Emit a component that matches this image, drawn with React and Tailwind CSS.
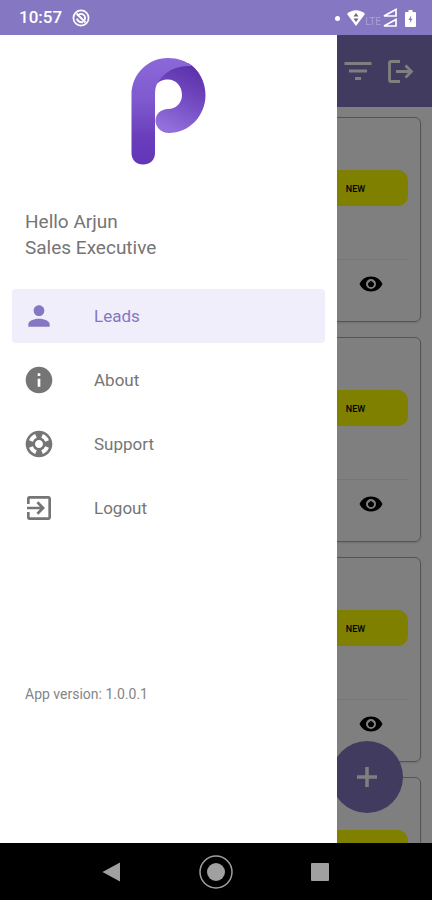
import React from 'react';
import { MdPerson, MdInfo, MdSupport, MdExitToApp, MdFilterList } from 'react-icons/md';

const menuItems = [
    { label: 'Leads', icon: MdPerson, active: true },
    { label: 'About', icon: MdInfo },
    { label: 'Support', icon: MdSupport },
    { label: 'Logout', icon: MdExitToApp },
];

const leads = [
    { id: 1, status: 'NEW' },
    { id: 2, status: 'NEW' },
    { id: 3, status: 'NEW' },
    { id: 4, status: '' },
];

const Logo = () => (
    <svg width="76" height="108" viewBox="0 0 76 108" className="mx-auto" role="img" aria-label="P">
        <defs>
            <linearGradient id="stem" x1="0" y1="0" x2="0" y2="1">
                <stop offset="0" stopColor="#8b68d8" />
                <stop offset="0.4" stopColor="#7f59cf" />
                <stop offset="0.75" stopColor="#6a3dbb" />
                <stop offset="1" stopColor="#6236b8" />
            </linearGradient>
            <linearGradient id="bowl" x1="0.75" y1="0" x2="0.4" y2="1">
                <stop offset="0" stopColor="#5a2fa8" />
                <stop offset="0.45" stopColor="#7047bf" />
                <stop offset="1" stopColor="#9270dc" />
            </linearGradient>
        </defs>
        <path
            d="M58 6C69 12 75.500 25 75.500 38C75.500 59 59 76 39 76C31 76 25.500 70 25.500 63.500C25.500 57 31 52 38 52C46 52 52 46 52 38C52 29 46 22.500 38 22.500C33 22.500 29 24 26 28C32 14 44 8 58 6Z"
            fill="url(#bowl)"
        />
        <path
            d="M1.500 38C1.500 17 18 1 38 1C48 1 56 4 62 9C46 8 34 15 28 25C26 28 25 32 25 37V96C25 103 20 107.500 13 107.500C6.500 107.500 1.500 103 1.500 96Z"
            fill="url(#stem)"
        />
    </svg>
);

const EyeIcon = () => (
    <svg width="24" height="16" viewBox="0 0 24 16" fill="currentColor">
        <path
            fillRule="evenodd"
            d="M12 0.500C6.500 0.500 2.500 3.500 0.500 8C2.500 12.500 6.500 15.500 12 15.500S21.500 12.500 23.500 8C21.500 3.500 17.500 0.500 12 0.500ZM12 3A5 5 0 1 1 12 13A5 5 0 1 1 12 3Z"
        />
        <path d="M12 4.800L15 7.200V9L13.500 11H10.500L9 9V7.200Z" />
    </svg>
);

const SignOutIcon = () => (
    <svg width="27" height="25" viewBox="0 0 27 25" fill="none" stroke="currentColor" strokeWidth="2.800">
        <path d="M13 2.500H4Q2.500 2.500 2.500 4V21Q2.500 22.500 4 22.500H13" />
        <path d="M9 12.500H24M18.500 6.500L24.500 12.500L18.500 18.500" />
    </svg>
);

const StatusBar = () => (
    <div className="flex h-[35px] shrink-0 items-center justify-between bg-[#8577c1] pl-[19px] pr-4 pt-px text-white">
        <div className="flex items-center gap-[10px]">
            <span className="text-[17px] font-medium">10:57</span>
            <svg width="18" height="18" viewBox="0 0 18 18" fill="none" stroke="currentColor" strokeWidth="1.700">
                <circle cx="9" cy="9" r="7.600" />
                <path d="M5.500 7A4 4 0 0 1 12.500 11M11 13A4.500 4.500 0 0 1 5 9.500" strokeWidth="2" />
                <path d="M4.500 4.500L13.500 13.500" strokeWidth="2" />
            </svg>
        </div>
        <div className="flex items-center">
            <span className="mr-[7px] size-[5px] rounded-full bg-white" />
            <svg width="18" height="16" viewBox="0 0 18 16">
                <path d="M0 4C5 -1 13 -1 18 4L9 16Z" fill="currentColor" />
                <path d="M9 3L11.500 6.500H6.500ZM9 12L6.500 8.500H11.500Z" fill="#6b6492" />
            </svg>
            <span className="mt-2 text-[10px] leading-3 text-[#aaa0d6]">LTE</span>
            <svg width="16" height="20" viewBox="0 0 16 20" fill="none" stroke="currentColor" strokeWidth="1.700" className="ml-px">
                <path d="M2 8L14 1.500V8Z" />
                <path d="M2 18L14 11.500V18Z" />
            </svg>
            <svg width="11" height="17" viewBox="0 0 11 17" className="ml-[7px]">
                <path d="M3.500 0H7.500V2H10Q11 2 11 3V16Q11 17 10 17H1Q0 17 0 16V3Q0 2 1 2H3.500Z" fill="currentColor" />
                <path d="M6.200 5.500L3.500 10H5.200L4.800 13L7.500 8.700H5.900Z" fill="#8577c1" />
            </svg>
        </div>
    </div>
);

const LeadCard = ({ status }) => (
    <article className="shrink-0 rounded-md border border-[#a8a8a8] px-3 pt-[52px] shadow-sm">
        <div className="ml-auto flex h-9 w-[105px] items-center justify-center rounded-[10px] bg-[#ffff00] pt-[3px] text-[9px] font-medium text-black">
            {status}
        </div>
        <div className="mt-[53px] flex h-[62px] items-start justify-end border-t border-[#ececec] pr-[25px] pt-4">
            <button type="button" aria-label="View lead">
                <EyeIcon />
            </button>
        </div>
    </article>
);

const LeadsScreen = () => (
    <div className="flex h-full flex-col bg-white">
        <header className="flex h-[72px] shrink-0 items-center justify-end gap-[11px] bg-[#8577c1] pr-[18px] text-white">
            <button type="button" aria-label="Filter">
                <MdFilterList size={36} />
            </button>
            <button type="button" aria-label="Sign out">
                <SignOutIcon />
            </button>
        </header>
        <main className="flex flex-1 flex-col gap-[15px] overflow-hidden px-[11px] pt-[10px]">
            {leads.map((lead) => (
                <LeadCard key={lead.id} status={lead.status} />
            ))}
        </main>
        <button
            type="button"
            aria-label="Add lead"
            className="absolute bottom-[30px] right-[29px] flex size-[72px] items-center justify-center rounded-full bg-[#8577c1] text-white"
        >
            <svg width="22" height="22" viewBox="0 0 22 22" stroke="currentColor" strokeWidth="3.500">
                <path d="M11 1V21M1 11H21" />
            </svg>
        </button>
    </div>
);

const Drawer = () => (
    <aside className="absolute inset-y-0 left-0 w-[78%] bg-white pt-[22px] text-[#757575]">
        <Logo />
        <p className="mt-[44px] pl-[25px] text-[19px] leading-[26px]">
            Hello Arjun
            <br />
            Sales Executive
        </p>
        <nav className="mt-7 flex flex-col gap-[10px] px-3">
            {menuItems.map(({ label, icon: Icon, active }) => (
                <a
                    key={label}
                    href="#"
                    className={`flex h-[54px] items-center gap-[39px] rounded pl-[11px] text-[17px] ${
                        active ? 'bg-[#f0eefa] text-[#8577c1]' : ''
                    }`}
                >
                    <Icon size={32} />
                    <span className="pt-[2px]">{label}</span>
                </a>
            ))}
        </nav>
        <p className="mt-[149px] pl-[25px] text-[14px] leading-5 text-[#858585]">App version: 1.0.0.1</p>
    </aside>
);

const NavigationBar = () => (
    <div className="flex h-[57px] shrink-0 items-center justify-center gap-[77px] bg-black text-[#a0a0a0]">
        <button type="button" aria-label="Back">
            <svg width="20" height="20" viewBox="0 0 20 20" fill="currentColor">
                <path d="M0.500 10L18 0.500V19.500Z" />
            </svg>
        </button>
        <button type="button" aria-label="Home">
            <svg width="34" height="34" viewBox="0 0 34 34" fill="currentColor">
                <circle cx="17" cy="17" r="16" fill="none" stroke="currentColor" strokeWidth="1.500" />
                <circle cx="17" cy="17" r="9" />
            </svg>
        </button>
        <button type="button" aria-label="Recent apps">
            <svg width="20" height="20" viewBox="0 0 20 20" fill="currentColor">
                <rect x="1" y="1" width="18" height="18" rx="1" />
            </svg>
        </button>
    </div>
);

const App = () => {
    return (
        <div className="flex h-screen flex-col overflow-hidden font-['Roboto',sans-serif]">
            <StatusBar />
            <div className="relative flex-1 overflow-hidden">
                <LeadsScreen />
                <div className="absolute inset-0 bg-black/50" />
                <Drawer />
            </div>
            <NavigationBar />
        </div>
    );
};

export default App;
